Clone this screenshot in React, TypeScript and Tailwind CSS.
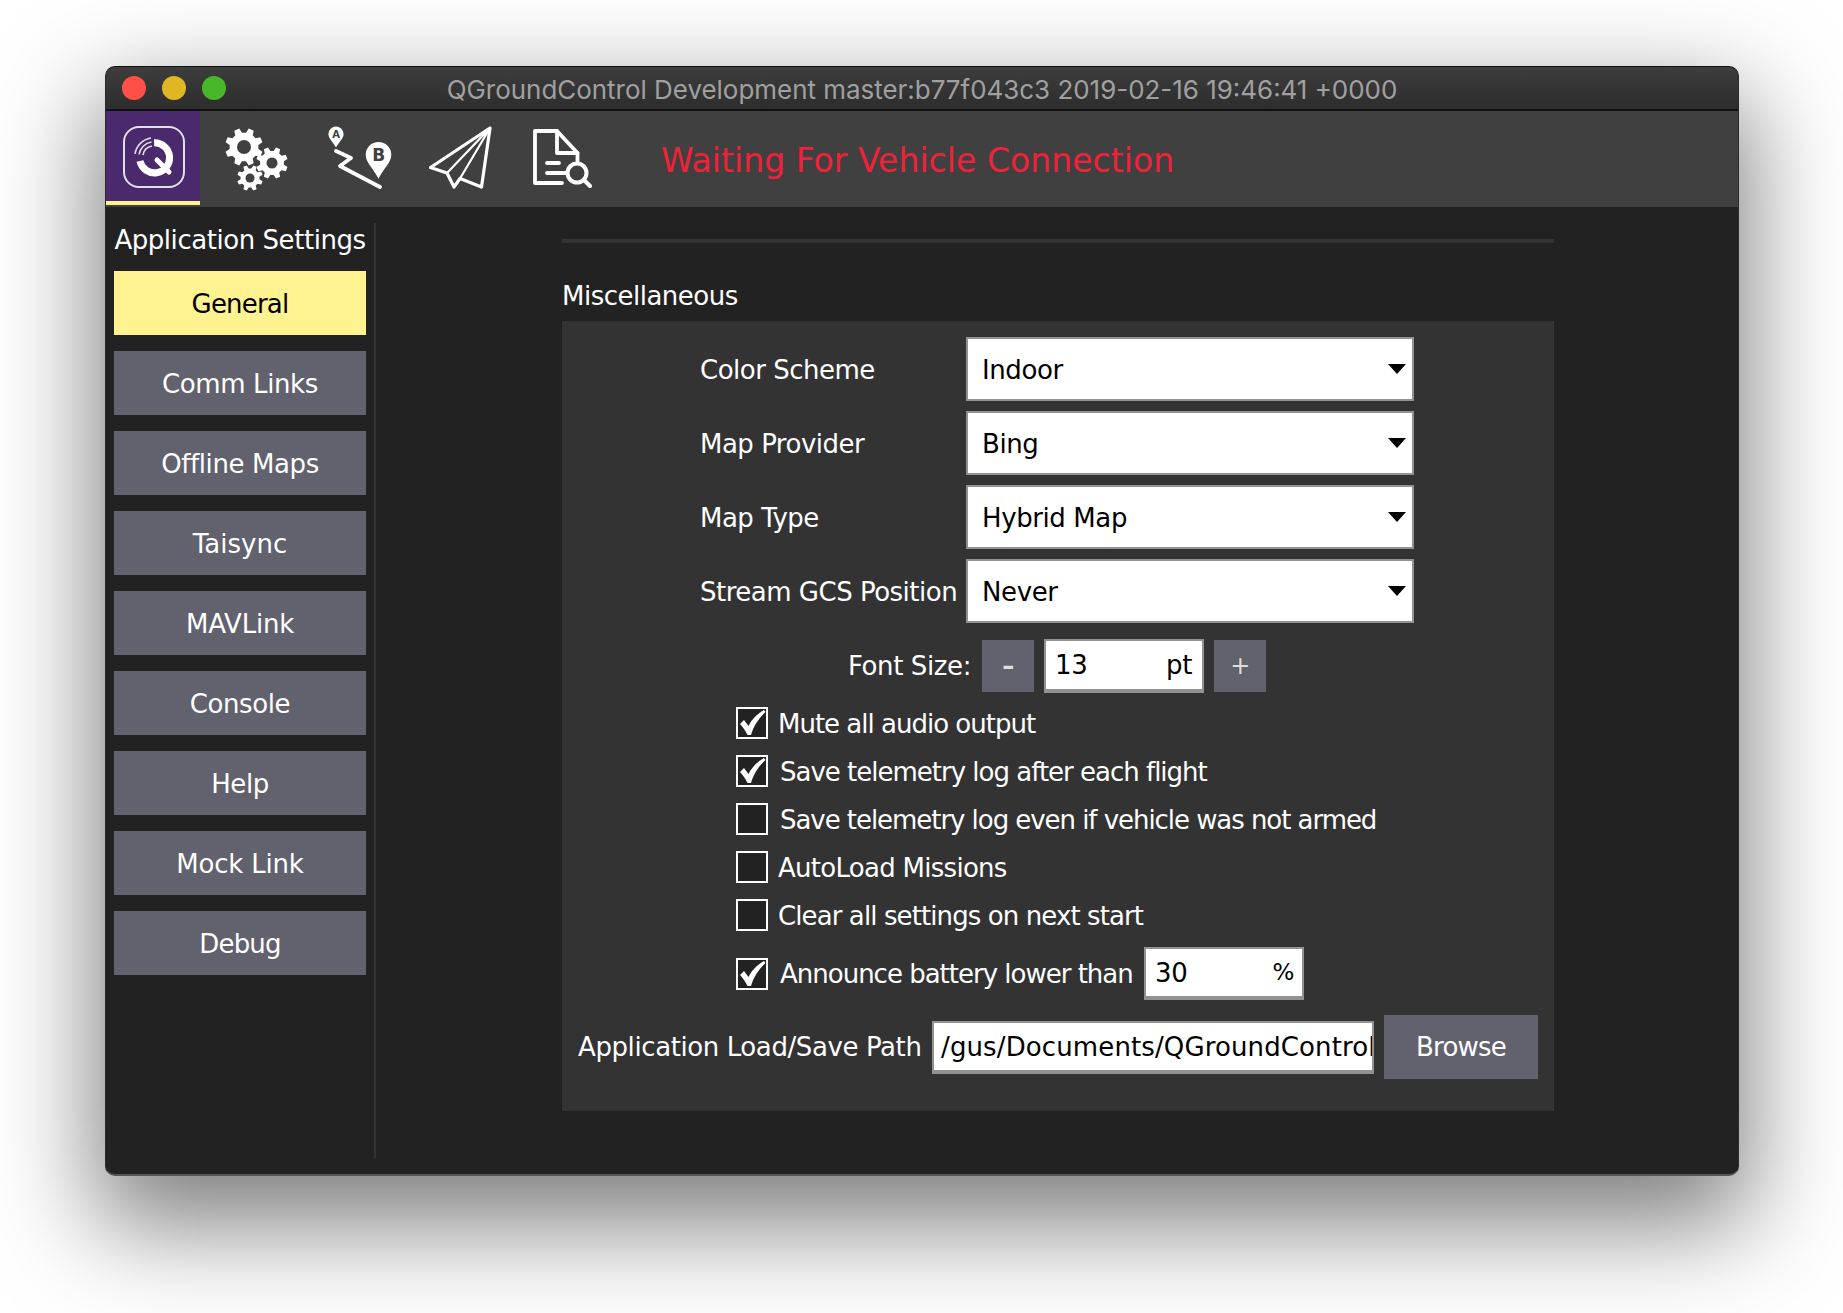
import React from 'react';

const navItems = [
  { label: 'General', tracking: 'tracking-[-0.8px]' },
  { label: 'Comm Links', tracking: 'tracking-[-0.4px]' },
  { label: 'Offline Maps', tracking: 'tracking-[-0.4px]' },
  { label: 'Taisync', tracking: 'tracking-[0px]' },
  { label: 'MAVLink', tracking: 'tracking-[-0.2px]' },
  { label: 'Console', tracking: 'tracking-[-0.4px]' },
  { label: 'Help', tracking: 'tracking-[-0.4px]' },
  { label: 'Mock Link', tracking: 'tracking-[-0.2px]' },
  { label: 'Debug', tracking: 'tracking-[-0.8px]' },
];

const gearPath = (cx: number, cy: number, r: number, inner: number, teeth: number) => {
  const pts: string[] = [];
  const step = (Math.PI * 2) / teeth;
  for (let i = 0; i < teeth; i++) {
    const a = i * step - step / 2;
    const at = [
      [inner, a - step * 0.32],
      [r, a - step * 0.18],
      [r, a + step * 0.18],
      [inner, a + step * 0.32],
    ];
    at.forEach(([rad, ang]) => pts.push(`${(cx + rad * Math.cos(ang)).toFixed(2)},${(cy + rad * Math.sin(ang)).toFixed(2)}`));
  }
  return `M${pts.join('L')}Z`;
};

const QgcLogo = () => (
  <svg width="64" height="64" viewBox="0 0 64 64" fill="none">
    <rect x="2" y="2" width="60" height="60" rx="15" stroke="#e4deea" strokeWidth="2" />
    <path d="M18.5 38 A15 15 0 1 0 30 18" stroke="#fff" strokeWidth="7" transform="rotate(8 32 33)" />
    <path d="M35 35 L47 47" stroke="#fff" strokeWidth="5" strokeLinecap="round" />
    <path d="M13 29 A19 19 0 0 1 29 13" stroke="#e4deea" strokeWidth="1.6" />
    <path d="M17 29.5 A15 15 0 0 1 29.5 17" stroke="#e4deea" strokeWidth="1.6" />
    <path d="M21 30 A11 11 0 0 1 30 21" stroke="#e4deea" strokeWidth="1.6" />
  </svg>
);

const Gears = () => (
  <svg width="66" height="64" viewBox="0 0 66 64">
    <path d={gearPath(20, 19, 19, 14.5, 8)} fill="#fff" />
    <circle cx="20" cy="19" r="11" fill="#fff" />
    <circle cx="20" cy="19" r="7" fill="#404040" />
    <path d={gearPath(48, 35, 16, 12, 8)} fill="#fff" />
    <circle cx="48" cy="35" r="5.5" fill="#404040" />
    <path d={gearPath(26, 50, 13, 9.5, 8)} fill="#fff" />
    <circle cx="26" cy="50" r="4.5" fill="#404040" />
  </svg>
);

const RouteIcon = () => (
  <svg width="66" height="64" viewBox="0 0 66 64" fill="none">
    <path d="M10 0.5 a7.6 7.6 0 0 1 7.6 7.6 c0 4.5 -4.6 8 -7.6 13.4 c-3 -5.4 -7.6 -8.9 -7.6 -13.4 a7.6 7.6 0 0 1 7.6 -7.6Z" fill="#fff" />
    <text x="10" y="12" textAnchor="middle" fontSize="10" fontWeight="700" fill="#404040" fontFamily="'DejaVu Sans', sans-serif">A</text>
    <path d="M52.5 16 a12.8 12.8 0 0 1 12.8 12.8 c0 8 -8 14 -12.8 24 c-4.8 -10 -12.8 -16 -12.8 -24 a12.8 12.8 0 0 1 12.8 -12.8Z" fill="#fff" />
    <text x="52.5" y="35" textAnchor="middle" fontSize="17" fontWeight="700" fill="#404040" fontFamily="'DejaVu Sans', sans-serif">B</text>
    <path d="M10 25 L25 32 L14 40 L54 61" stroke="#fff" strokeWidth="3.8" strokeLinecap="round" strokeLinejoin="round" />
  </svg>
);

const PlaneIcon = () => (
  <svg width="64" height="64" viewBox="0 0 64 64" fill="none" stroke="#fff" strokeLinejoin="round" strokeLinecap="round">
    <path d="M61 2 L1.5 41.5 L18 47 L25 61 L31 52.5 L52.5 61 Z" strokeWidth="3.2" />
    <path d="M61 2 L18 47 M61 2 L31 52.5" strokeWidth="2.2" />
  </svg>
);

const DocSearch = () => (
  <svg width="62" height="64" viewBox="0 0 62 64" fill="none" stroke="#fff" strokeWidth="3.8" strokeLinecap="round" strokeLinejoin="round">
    <path d="M32 55 H5 V3 H27 L47.5 25 V33" />
    <path d="M27 3 V25 H47.5" />
    <path d="M17 35 H29 M17 45 H37" />
    <circle cx="47" cy="45" r="9.5" strokeWidth="4" />
    <path d="M54 52 L60 58" strokeWidth="4" />
  </svg>
);

const Check = () => (
  <svg width="28" height="28" viewBox="2 2 28 28" fill="#fff">
    <path d="M4 17 L8 13 L12.5 19 C16 12 21 7 28 3 L29.5 5 C23 11 18 18 15 28 L11.5 28 C9.5 24 7 20 4 17Z" />
  </svg>
);

const Checkbox = ({ checked }: { checked?: boolean }) => (
  <div className="w-8 h-8 shrink-0 border-2 border-white bg-[#222222] flex items-center justify-center">
    {checked && <Check />}
  </div>
);

const SelectRow = ({ label, value }: { label: string; value: string }) => (
  <div className="flex items-center pl-[138px] h-16">
    <div className="w-[266px] text-white whitespace-nowrap pt-[2px] tracking-[-0.5px]">{label}</div>
    <div className="w-[448px] h-16 bg-white border-2 border-[#929292] flex items-center justify-between pl-[14px] pr-[6px] text-black">
      <span className="pt-[2px]">{value}</span>
      <div className="w-0 h-0 border-x-[9px] border-x-transparent border-t-[10px] border-t-black" />
    </div>
  </div>
);

const CheckRow = ({ label, checked, gap, tracking }: { label: string; checked?: boolean; gap: string; tracking: string }) => (
  <div className={`flex items-center h-8 pl-[174px] text-white ${gap} ${tracking}`}>
    <Checkbox checked={checked} />
    <span className="pt-[1px]">{label}</span>
  </div>
);

export default function App() {
  return (
    <div className="w-[1843px] h-[1313px] bg-white pt-[66px] pl-[105px] overflow-hidden font-['DejaVu_Sans',sans-serif] text-[26px] leading-none tracking-[-0.4px]">
      <div className="w-[1634px] h-[1110px] rounded-[10px] overflow-hidden border border-[#2a2a2a] border-t-[#111111] border-b-[#555555] border-b-2 flex flex-col bg-[#222222] shadow-[0_40px_100px_10px_rgba(0,0,0,0.5)]">
        {/* title bar */}
        <div className="relative h-[44px] shrink-0 bg-gradient-to-b from-[#3d3d3d] to-[#2d2d2d] border-b-2 border-[#111111] flex items-center justify-center">
          <div className="absolute left-[16px] flex gap-[16px]">
            <div className="w-6 h-6 rounded-full bg-[#fe5048]" />
            <div className="w-6 h-6 rounded-full bg-[#e0b623]" />
            <div className="w-6 h-6 rounded-full bg-[#48b729]" />
          </div>
          <span className="font-['Inter',sans-serif] text-[25.95px] text-[#a0a0a0] tracking-normal mt-[3px]">QGroundControl Development master:b77f043c3 2019-02-16 19:46:41 +0000</span>
        </div>

        {/* toolbar */}
        <div className="h-[96px] shrink-0 bg-[#404040] flex">
          <div className="w-[94px] h-[94px] bg-[#4a2a6c] border-b-[4px] border-[#fff291] flex items-center justify-center">
            <div className="mt-[2px] ml-[2px]"><QgcLogo /></div>
          </div>
          <div className="flex items-start pt-[17px] pl-[24px]">
            <Gears />
            <div className="ml-[36px] mt-[-2px]"><RouteIcon /></div>
            <div className="ml-[37px] mt-[-2px]"><PlaneIcon /></div>
            <div className="ml-[37px]"><DocSearch /></div>
          </div>
          <div className="ml-[69px] self-center text-[#f0213a] text-[33px] tracking-[0.05px] mt-[3px] whitespace-nowrap">Waiting For Vehicle Connection</div>
        </div>

        <div className="flex-1 flex min-h-0">
          {/* sidebar */}
          <div className="w-[270px] shrink-0 mt-4 pl-[8px] border-r-2 border-[#333333] h-[935px]">
            <div className="w-[252px] h-8 mb-4 pt-[2px] flex items-center justify-center text-white whitespace-nowrap tracking-[-0.45px]">Application Settings</div>
            <div className="flex flex-col gap-4">
              {navItems.map((item, i) => (
                <div
                  key={item.label}
                  className={`w-[252px] h-16 pt-[2px] flex items-center justify-center ${item.tracking} ${i === 0 ? 'bg-[#fff291] text-black' : 'bg-[#62616e] text-white'}`}
                >
                  {item.label}
                </div>
              ))}
            </div>
          </div>

          {/* main */}
          <div className="flex-1 pl-[186px] pt-[32px]">
            <div className="w-[992px] h-1 bg-[#333333]" />
            <div className="h-[78px] flex items-center text-white pt-[28px] tracking-[-0.5px]">Miscellaneous</div>
            <div className="w-[992px] bg-[#333333] pt-4 pb-8">
              <div className="flex flex-col gap-[10px]">
                <SelectRow label="Color Scheme" value="Indoor" />
                <SelectRow label="Map Provider" value="Bing" />
                <SelectRow label="Map Type" value="Hybrid Map" />
                <SelectRow label="Stream GCS Position" value="Never" />
              </div>

              <div className="flex items-center mt-4 text-white h-[54px]">
                <div className="w-[409px] text-right">Font Size:</div>
                <div className="ml-[11px] w-[52px] h-[52px] bg-[#62616e] flex items-center justify-center text-[#dddddd] text-[24px] font-bold">–</div>
                <div className="ml-[10px] w-[160px] h-[54px] bg-white border-x-2 border-t-2 border-b-[4px] border-[#929292] flex items-center justify-between pl-[9px] pr-[10px] text-black">
                  <span>13</span>
                  <span>pt</span>
                </div>
                <div className="ml-[10px] w-[52px] h-[52px] bg-[#62616e] flex items-center justify-center text-[#dddddd] text-[24px]">+</div>
              </div>

              <div className="flex flex-col gap-4 mt-[14px]">
                <CheckRow label="Mute all audio output" checked gap="gap-[10px]" tracking="tracking-[-1px]" />
                <CheckRow label="Save telemetry log after each flight" checked gap="gap-[12px]" tracking="tracking-[-1px]" />
                <CheckRow label="Save telemetry log even if vehicle was not armed" gap="gap-[12px]" tracking="tracking-[-1.05px]" />
                <CheckRow label="AutoLoad Missions" gap="gap-[10px]" tracking="tracking-[-0.72px]" />
                <CheckRow label="Clear all settings on next start" gap="gap-[10px]" tracking="tracking-[-0.9px]" />
              </div>

              <div className="flex items-center mt-4 h-[53px] pl-[174px] text-white">
                <Checkbox checked />
                <span className="ml-[12px] w-[364px] whitespace-nowrap tracking-[-1px]">Announce battery lower than</span>
                <div className="w-[160px] h-[53px] bg-white border-x-2 border-t-2 border-b-[4px] border-[#929292] flex items-center justify-between pl-[9px] pr-[8px] text-black">
                  <span>30</span>
                  <span className="text-[23px]">%</span>
                </div>
              </div>

              <div className="flex items-center mt-[15px] h-16 pl-4 text-white">
                <div className="w-[354px] whitespace-nowrap">Application Load/Save Path</div>
                <div className="w-[442px] h-[53px] bg-white border-x-2 border-t-2 border-b-[4px] border-[#929292] flex items-center overflow-hidden whitespace-nowrap pl-[7px] pt-[1px] text-black tracking-[0.12px]">
                  /gus/Documents/QGroundControl
                </div>
                <div className="ml-[10px] w-[154px] h-16 bg-[#62616e] flex items-center justify-center tracking-[-0.8px]">Browse</div>
              </div>
            </div>
          </div>
        </div>
      </div>
    </div>
  );
}
